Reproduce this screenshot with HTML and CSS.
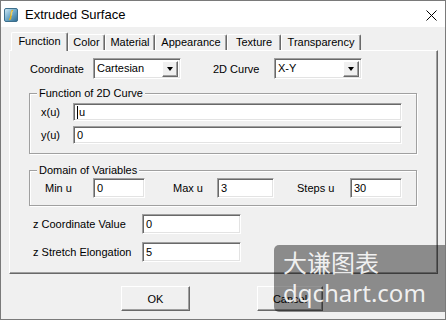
FILE: index.html
```html
<!DOCTYPE html>
<html lang="en">
	<head>
		<meta charset="UTF-8" />
		<title>Extruded Surface</title>
		<link rel="stylesheet" href="styles.css">
	</head>
	<body>
		<div class="window">
			<div class="titlebar">
				<svg class="app-icon" width="14" height="14" viewBox="0 0 14 14">
					<defs>
						<linearGradient id="ig" x1="0" y1="0" x2="1" y2="1">
							<stop offset="0" stop-color="#d6ecf6" />
							<stop offset="0.5" stop-color="#6fa9c9" />
							<stop offset="1" stop-color="#2c6a8e" />
						</linearGradient>
					</defs>
					<rect x="0.5" y="0.5" width="13" height="13" rx="1.5" fill="url(#ig)" stroke="#3d6f8c" />
					<path d="M9 2.5 C6.5 2.5 7.8 6 7 7.5 C6.3 9 7.5 11.5 5 11.5" fill="none" stroke="#e0b020" stroke-width="1.6" />
					<path d="M8.3 3 C7 4 8.2 6.5 7.6 7.5" fill="none" stroke="#fff6c0" stroke-width="0.6" />
				</svg>
				<span class="title">Extruded Surface</span>
				<svg class="close" width="11" height="11" viewBox="0 0 11 11">
					<path d="M0.5 0.5 L10.5 10.5 M10.5 0.5 L0.5 10.5" stroke="#000" stroke-width="1" />
				</svg>
			</div>
			<div class="client">
				<div class="tabs">
					<div class="tab active" style="width: 57px">Function</div>
					<div class="tab" style="width: 37px">Color</div>
					<div class="tab" style="width: 50px">Material</div>
					<div class="tab" style="width: 72px">Appearance</div>
					<div class="tab" style="width: 54px">Texture</div>
					<div class="tab" style="width: 80px">Transparency</div>
				</div>
				<div class="panel">
					<div class="top-row">
						<span class="lbl lbl-coord">Coordinate</span>
						<div class="combo"><span class="combo-text">Cartesian</span><span class="drop"><i class="arrow"></i></span></div>
						<span class="lbl lbl-curve">2D Curve</span>
						<div class="combo"><span class="combo-text">X-Y</span><span class="drop"><i class="arrow"></i></span></div>
					</div>

					<div class="group group-func">
						<span class="legend">Function of 2D Curve</span>
						<div class="func-row">
							<span class="lbl lbl-fn">x(u)</span>
							<div class="edit edit-wide"><span class="caret"></span>u</div>
						</div>
						<div class="func-row">
							<span class="lbl lbl-fn">y(u)</span>
							<div class="edit edit-wide">0</div>
						</div>
					</div>

					<div class="group group-domain">
						<span class="legend">Domain of Variables</span>
						<div class="domain-row">
							<span class="lbl lbl-min">Min u</span>
							<div class="edit edit-small">0</div>
							<span class="lbl lbl-max">Max u</span>
							<div class="edit edit-max">3</div>
							<span class="lbl lbl-steps">Steps u</span>
							<div class="edit edit-small">30</div>
						</div>
					</div>

					<div class="z-rows">
						<div class="z-row">
							<span class="lbl lbl-z">z Coordinate Value</span>
							<div class="edit edit-z">0</div>
						</div>
						<div class="z-row">
							<span class="lbl lbl-z">z Stretch Elongation</span>
							<div class="edit edit-z">5</div>
						</div>
					</div>
				</div>
				<div class="buttons">
					<button class="btn btn-ok">OK</button>
					<button class="btn btn-cancel">Cancel</button>
				</div>
			</div>
			<div class="watermark">
				<div class="wm-cn">大谦图表</div>
				<div class="wm-en">dqchart.com</div>
			</div>
		</div>
	</body>
</html>
```

FILE: styles.css
```css
* {
	box-sizing: border-box;
	margin: 0;
	padding: 0;
}
body {
	font-family: "Liberation Sans", Arial, sans-serif;
	font-size: 11px;
	color: #000;
	background: #fff;
}
.window {
	position: relative;
	width: 446px;
	height: 320px;
	border: 1px solid #7a7a7a;
	background: #f0f0f0;
	overflow: hidden;
	display: flex;
	flex-direction: column;
}
.titlebar {
	height: 26px;
	background: #fff;
	display: flex;
	align-items: center;
	flex-shrink: 0;
}
.app-icon {
	margin-left: 3px;
	margin-top: 1px;
}
.title {
	margin-left: 7px;
	font-size: 13px;
	color: #000;
}
.close {
	margin-left: auto;
	margin-right: 8px;
	margin-top: 2px;
}
.client {
	flex: 1;
	display: flex;
	flex-direction: column;
}

/* tabs */
.tabs {
	display: flex;
	align-items: flex-end;
	height: 18px;
	margin-top: 5px;
	margin-left: 10px;
}
.tab {
	height: 16px;
	border-top: 1px solid #fff;
	border-left: 1px solid #fff;
	border-right: 1px solid #696969;
	border-radius: 2px 2px 0 0;
	box-shadow: inset -1px 0 0 #a0a0a0;
	text-align: center;
	line-height: 15px;
	white-space: nowrap;
}
.tab.active {
	position: relative;
	z-index: 1;
	height: 19px;
	margin-bottom: -1px;
	background: #f0f0f0;
	line-height: 17px;
}

/* panel */
.panel {
	width: 429px;
	height: 224px;
	margin-left: 8px;
	border-top: 1px solid #fff;
	border-left: 1px solid #fff;
	border-right: 1px solid #696969;
	border-bottom: 1px solid #696969;
	box-shadow: inset -1px -1px 0 #a0a0a0;
	display: flex;
	flex-direction: column;
	align-items: flex-start;
}
.lbl {
	white-space: nowrap;
	flex-shrink: 0;
}
.top-row {
	display: flex;
	align-items: center;
	margin-top: 7px;
	margin-left: 20px;
	height: 21px;
}
.lbl-coord {
	width: 63px;
}
.lbl-curve {
	width: 61px;
	margin-left: 32px;
}
.combo {
	width: 88px;
	height: 21px;
	background: #fff;
	border: 1px solid;
	border-color: #a0a0a0 #fff #fff #a0a0a0;
	box-shadow: inset 1px 1px 0 #696969, inset -1px -1px 0 #e3e3e3;
	display: flex;
	align-items: center;
	padding: 0 2px 0 3px;
}
.combo-text {
	flex: 1;
	margin-top: -2px;
}
.drop {
	width: 16px;
	height: 16px;
	background: #f0f0f0;
	border: 1px solid;
	border-color: #fff #696969 #696969 #fff;
	box-shadow: inset -1px -1px 0 #a0a0a0;
	display: flex;
	align-items: center;
	justify-content: center;
}
.arrow {
	width: 0;
	height: 0;
	border-left: 3.5px solid transparent;
	border-right: 3.5px solid transparent;
	border-top: 4px solid #000;
	margin-top: 1px;
}

/* group boxes */
.group {
	position: relative;
	width: 388px;
	margin-left: 19px;
	border: 1px solid #a0a0a0;
	box-shadow: 1px 1px 0 #fff, inset 1px 1px 0 #fff;
}
.legend {
	position: absolute;
	top: -7px;
	left: 7px;
	padding: 0 2px;
	background: #f0f0f0;
	line-height: 13px;
	white-space: nowrap;
}
.group-func {
	height: 61px;
	margin-top: 14px;
	padding: 9px 0 0 11px;
	display: flex;
	flex-direction: column;
	gap: 5px;
}
.func-row,
.domain-row,
.z-row {
	display: flex;
	align-items: center;
}
.lbl-fn {
	width: 32px;
}
.group-domain {
	height: 36px;
	margin-top: 16px;
	padding: 7px 0 0 15px;
}
.lbl-min {
	width: 48px;
}
.lbl-max {
	width: 44px;
	margin-left: 28px;
}
.lbl-steps {
	width: 53px;
	margin-left: 23px;
}

/* edits */
.edit {
	height: 20px;
	background: #fff;
	border: 1px solid;
	border-color: #a0a0a0 #fff #fff #a0a0a0;
	box-shadow: inset 1px 1px 0 #696969, inset -1px -1px 0 #e3e3e3;
	padding-left: 3px;
	display: flex;
	align-items: center;
	white-space: nowrap;
}
.edit-wide {
	width: 329px;
	height: 18px;
}
.edit-small {
	width: 52px;
}
.edit-max {
	width: 57px;
}
.caret {
	width: 1px;
	height: 13px;
	background: #000;
	margin-right: 1px;
}
.z-rows {
	margin-top: 8px;
	margin-left: 23px;
	display: flex;
	flex-direction: column;
	gap: 8px;
}
.lbl-z {
	width: 109px;
}
.edit-z {
	width: 99px;
}

/* buttons */
.buttons {
	display: flex;
	margin-top: 12px;
}
.btn {
	height: 25px;
	font-family: "Liberation Sans", Arial, sans-serif;
	font-size: 11px;
	color: #000;
	background: #f0f0f0;
	border: 1px solid;
	border-color: #fff #696969 #696969 #fff;
	box-shadow: inset -1px -1px 0 #a0a0a0;
}
.btn-ok {
	width: 69px;
	margin-left: 120px;
}
.btn-cancel {
	width: 66px;
	margin-left: 67px;
}

/* watermark overlay */
.watermark {
	position: absolute;
	left: 273px;
	top: 244px;
	width: 180px;
	height: 67px;
	background: rgba(0, 0, 0, 0.42);
	border-radius: 5px;
	padding-left: 9px;
	color: rgba(255, 255, 255, 0.88);
	font-family: "Noto Sans", "Noto Sans CJK SC", sans-serif;
	font-size: 24px;
}
.wm-cn {
	font-family: "Noto Sans CJK SC", sans-serif;
	line-height: 28px;
	margin-top: 3px;
}
.wm-en {
	line-height: 30px;
	margin-top: 2px;
}
```
